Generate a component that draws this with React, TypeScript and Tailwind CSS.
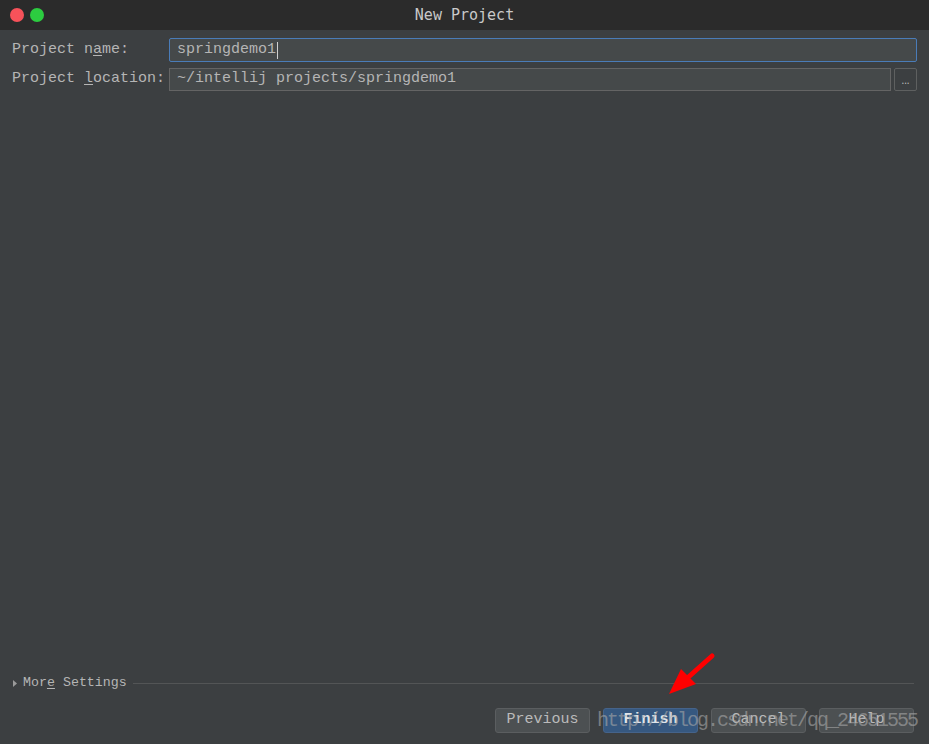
import React from "react";

const mono = { fontFamily: '"Liberation Mono", "Courier New", monospace' };

function Btn({ children, primary }: { children: React.ReactNode; primary?: boolean }) {
  return (
    <div
      className={
        "w-[95px] h-[25px] flex items-center justify-center rounded-[3px] border text-[15px] " +
        (primary
          ? "bg-[#365880] border-[#45638a] text-[#dfe3e8] font-bold"
          : "bg-[#4c5052] border-[#5b5e60] text-[#bbbbbb]")
      }
      style={mono}
    >
      {children}
    </div>
  );
}

export default function App() {
  return (
    <div className="relative w-[929px] h-[744px] flex flex-col bg-[#3c3f41] overflow-hidden">
      {/* Title bar */}
      <div className="relative h-[30px] bg-[#2b2b2b] flex items-center justify-center">
        <div className="absolute left-[10px] top-[8px] flex gap-[6px]">
          <div className="w-[14px] h-[14px] rounded-full bg-[#f7525a]" />
          <div className="w-[14px] h-[14px] rounded-full bg-[#2ccc40]" />
        </div>
        <span
          className="text-[15px] text-[#c9c9c9]"
          style={{ fontFamily: '"DejaVu Sans Mono", monospace' }}
        >
          New Project
        </span>
      </div>

      {/* Body */}
      <div className="flex-1 flex flex-col px-[12px]">
        <div className="flex items-center mt-[8px] h-[24px]">
          <div className="w-[157px] text-[15px] text-[#b5b5b5]" style={mono}>
            Project n<span className="underline underline-offset-2">a</span>me:
          </div>
          <div
            className="flex-1 h-[24px] flex items-center px-[7px] bg-[#45494a] border border-[#4a7cb8] rounded-[2px] text-[15px] text-[#b5b5b5]"
            style={mono}
          >
            springdemo1<span className="inline-block w-[1px] h-[17px] bg-[#d0d0d0] ml-[1px]" />
          </div>
        </div>
        <div className="flex items-center mt-[6px] h-[23px]">
          <div className="w-[157px] text-[15px] text-[#b5b5b5]" style={mono}>
            Project <span className="underline underline-offset-2">l</span>ocation:
          </div>
          <div
            className="flex-1 h-[23px] flex items-center px-[7px] bg-[#45494a] border border-[#646464] text-[15px] text-[#b5b5b5]"
            style={mono}
          >
            ~/intellij projects/springdemo1
          </div>
          <div className="ml-[3px] w-[23px] h-[23px] flex items-center justify-center border border-[#5e6060] rounded-[2px] bg-[#3c3f41] text-[#bbbbbb] text-[10px] leading-none">
            ...
          </div>
        </div>

        <div className="flex-1" />

        {/* More settings */}
        <div className="flex items-center h-[18px]">
          <svg width="4" height="7" viewBox="0 0 4 7" className="ml-[1px] mr-[6px]">
            <path d="M0 0 L4 3.5 L0 7 Z" fill="#9a9a9a" />
          </svg>
          <span className="text-[13.3px] text-[#b5b5b5]" style={mono}>
            Mor<span className="underline underline-offset-2">e</span> Settings
          </span>
          <div className="flex-1 h-[1px] bg-[#535556] ml-[6px] mr-[3px]" />
        </div>

        {/* Buttons */}
        <div className="flex justify-end gap-[13px] mt-[16px] mb-[11px] mr-[3px]">
          <Btn>Previous</Btn>
          <Btn primary>Finish</Btn>
          <Btn>Cancel</Btn>
          <Btn>Help</Btn>
        </div>
      </div>

      {/* Red arrow annotation */}
      <svg className="absolute left-0 top-0 pointer-events-none" width="929" height="744">
        <line x1="712" y1="656" x2="684" y2="681" stroke="#ff0000" strokeWidth="5" strokeLinecap="round" />
        <path d="M669 694 L681 669 L696 684 Z" fill="#ff0000" />
      </svg>

      {/* Watermark */}
      <div
        className="absolute left-[597px] top-[706px] text-[20px] tracking-[-2px] text-[#a8a8a8]/60 pointer-events-none whitespace-nowrap"
        style={mono}
      >
        http://blog.csdn.net/qq_24651555
      </div>
    </div>
  );
}
